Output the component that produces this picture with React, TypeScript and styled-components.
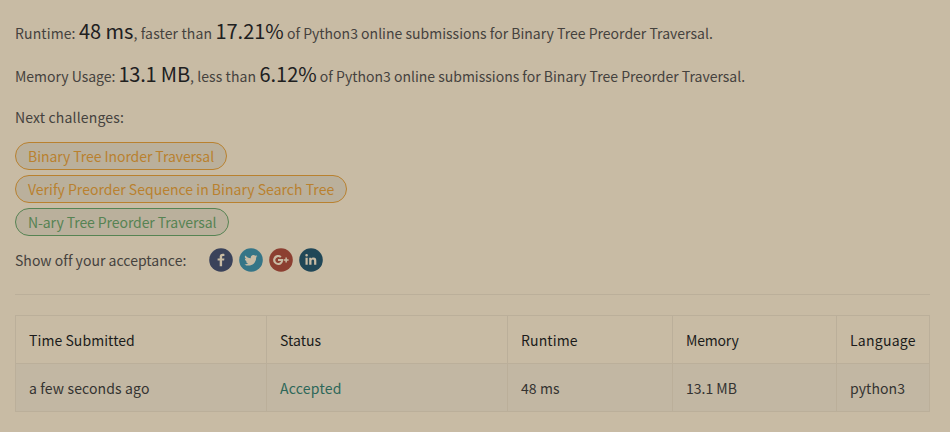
import React from "react";
import styled, { createGlobalStyle } from "styled-components";

const GlobalStyle = createGlobalStyle`
  * { box-sizing: border-box; }
  body {
    margin: 0;
    background: #c8bba4;
    color: #45423e;
    font-family: "Noto Sans CJK SC", "Noto Sans", sans-serif;
    font-size: 14px;
    overflow: hidden;
  }
`;

const Page = styled.main`
  height: 432px;
  padding: 12px 20px 0 15px;
`;

const Line = styled.div<{ $height: number; $spacing?: number }>`
  height: ${(p) => p.$height}px;
  line-height: ${(p) => p.$height}px;
  letter-spacing: ${(p) => p.$spacing ?? 0}px;
  white-space: nowrap;
`;

const Run = styled.span<{ $spacing?: number }>`
  letter-spacing: ${(p) => p.$spacing ?? 0}px;
`;

const Figure = styled(Run)`
  color: #20201f;
  font-size: 20px;
  line-height: 1;
`;

const Challenges = styled.div`
  display: flex;
  flex-direction: column;
  align-items: flex-start;
  gap: 5px;
  margin-top: 6px;
`;

const Pill = styled.a<{ $color: string; $width: number; $spacing: number }>`
  width: ${(p) => p.$width}px;
  height: 28px;
  padding-left: 12px;
  border: 1px solid ${(p) => p.$color};
  border-radius: 14px;
  background: #bab09c;
  color: ${(p) => p.$color};
  line-height: 27px;
  letter-spacing: ${(p) => p.$spacing}px;
  white-space: nowrap;
`;

const Share = styled.div`
  display: flex;
  align-items: center;
  height: 24px;
  margin: 12px 0 22px;
`;

const ShareLabel = styled.span`
  width: 194px;
  line-height: 24px;
  letter-spacing: 0.03px;
`;

const Icons = styled.div`
  display: flex;
  gap: 6px;
`;

const Rule = styled.hr`
  height: 1px;
  margin: 0 0 20px;
  border: 0;
  background: #bbaf9a;
`;

const Table = styled.table`
  width: 914px;
  border-collapse: collapse;
  table-layout: fixed;
`;

const Row = styled.tr<{ $shaded?: boolean }>`
  height: 48px;
  background: ${(p) => (p.$shaded ? "#c2b7a3" : "transparent")};
`;

const Cell = styled.td<{ $color?: string; $spacing: number }>`
  padding: 0 0 0 13px;
  border: 1px solid #bbaf9a;
  color: ${(p) => p.$color ?? "#343331"};
  font-weight: 400;
  text-align: left;
  line-height: 24px;
  letter-spacing: ${(p) => p.$spacing}px;
  white-space: nowrap;
  vertical-align: middle;
`;

const icons = [
  {
    name: "Facebook",
    color: "#3a425a",
    path: "M13.1 18.2v-5.6h2l.3-2.2h-2.3V9c0-.7.2-1.1 1.1-1.1h1.2v-2c-.2 0-.9-.1-1.8-.1-1.7 0-2.9 1-2.9 3v1.6H8.6v2.2h2.1v5.6z",
  },
  {
    name: "Twitter",
    color: "#357587",
    path: "M18.4 8.2c-.5.2-1 .4-1.5.4.5-.3 1-.8 1.2-1.4-.5.3-1.1.5-1.7.6a2.7 2.7 0 0 0-4.6 2.4c-2.2-.1-4.2-1.2-5.5-2.8a2.7 2.7 0 0 0 .8 3.6c-.4 0-.8-.1-1.2-.3 0 1.3.9 2.4 2.2 2.7-.4.1-.8.1-1.2 0 .3 1.1 1.3 1.9 2.5 1.9-1.1.9-2.5 1.3-4 1.1 1.2.8 2.6 1.2 4.1 1.2 5 0 7.8-4.3 7.6-8 .5-.4 1-.9 1.3-1.4z",
  },
  {
    name: "Google Plus",
    color: "#8c3f31",
    path: "M9 11v2h3c-.3 1-1.2 1.9-2.8 1.9a2.9 2.9 0 1 1 1.9-5.1l1.5-1.4a5 5 0 1 0-3.4 8.6c3 0 4.9-2.1 4.9-5V11zM16.4 9.6v1.7h-1.7v1.5h1.7v1.7h1.5v-1.7h1.7v-1.5h-1.7V9.6z",
  },
  {
    name: "LinkedIn",
    color: "#204757",
    path: "M6.5 9.7h2.2v7.1H6.5zM7.6 5.9a1.3 1.3 0 1 1 0 2.6 1.3 1.3 0 0 1 0-2.6zM10.2 9.7h2.1v1c.3-.6 1.1-1.2 2.2-1.2 2.4 0 2.8 1.5 2.8 3.5v3.8h-2.2v-3.3c0-.8 0-1.9-1.2-1.9s-1.4.9-1.4 1.8v3.4h-2.3z",
  },
];

const columns = [
  { title: "Time Submitted", titleSpacing: 0.07, value: "a few seconds ago", valueSpacing: 0.14, width: 251 },
  { title: "Status", titleSpacing: 0.05, value: "Accepted", valueSpacing: 0.24, width: 241, color: "#2d6759" },
  { title: "Runtime", titleSpacing: 0.14, value: "48 ms", valueSpacing: 0.1, width: 165 },
  { title: "Memory", titleSpacing: -0.2, value: "13.1 MB", valueSpacing: 0, width: 164 },
  { title: "Language", titleSpacing: 0.25, value: "python3", valueSpacing: 0.07, width: 93 },
];

export default function App() {
  return (
    <Page>
      <GlobalStyle />
      <Line $height={43}>
        <Run $spacing={0.12}>Runtime: </Run>
        <Figure>48 ms</Figure>
        <Run $spacing={0.13}>, faster than </Run>
        <Figure>17.21%</Figure>
        <Run $spacing={0.01}> of Python3 online submissions for Binary Tree Preorder Traversal.</Run>
      </Line>
      <Line $height={43}>
        <Run $spacing={-0.03}>Memory Usage: </Run>
        <Figure $spacing={-0.17}>13.1 MB</Figure>
        <Run $spacing={0.1}>, less than </Run>
        <Figure>6.12%</Figure>
        <Run> of Python3 online submissions for Binary Tree Preorder Traversal.</Run>
      </Line>
      <Line $height={38} $spacing={0.16}>Next challenges:</Line>
      <Challenges>
        <Pill $color="#b9812f" $width={212} $spacing={-0.07}>Binary Tree Inorder Traversal</Pill>
        <Pill $color="#b9812f" $width={332} $spacing={0.02}>Verify Preorder Sequence in Binary Search Tree</Pill>
        <Pill $color="#568353" $width={214} $spacing={-0.08}>N-ary Tree Preorder Traversal</Pill>
      </Challenges>
      <Share>
        <ShareLabel>Show off your acceptance:</ShareLabel>
        <Icons>
          {icons.map((icon) => (
            <svg key={icon.name} width="24" height="24" viewBox="0 0 24 24" role="img" aria-label={icon.name}>
              <circle cx="12" cy="12" r="11.8" fill={icon.color} />
              <path d={icon.path} fill="#c8bba4" />
            </svg>
          ))}
        </Icons>
      </Share>
      <Rule />
      <Table>
        <colgroup>
          {columns.map((c) => (
            <col key={c.title} width={c.width} />
          ))}
        </colgroup>
        <thead>
          <Row>
            {columns.map((c) => (
              <Cell as="th" key={c.title} $color="#1b1b1b" $spacing={c.titleSpacing}>{c.title}</Cell>
            ))}
          </Row>
        </thead>
        <tbody>
          <Row $shaded>
            {columns.map((c) => (
              <Cell key={c.title} $color={c.color} $spacing={c.valueSpacing}>{c.value}</Cell>
            ))}
          </Row>
        </tbody>
      </Table>
    </Page>
  );
}
